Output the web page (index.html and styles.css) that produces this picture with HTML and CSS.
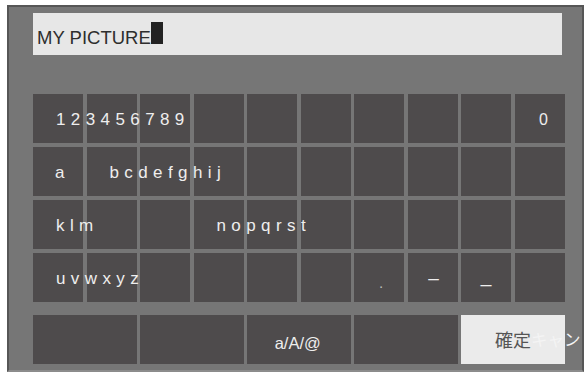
FILE: index.html
```html
<!DOCTYPE html>
<html lang="ja">
<head>
<meta charset="utf-8">
<title>Keyboard</title>
<link rel="stylesheet" href="styles.css">
</head>
<body>
<div class="panel">
  <div class="field"><span class="field-text">MY PICTURE</span><span class="cursor"></span></div>
  <div class="keys">
    <div class="key txt">123456789</div>
    <div class="key"></div><div class="key"></div><div class="key"></div><div class="key"></div>
    <div class="key"></div><div class="key"></div><div class="key"></div><div class="key"></div>
    <div class="key mid zero">0</div>

    <div class="key txt a">a</div>
    <div class="key txt">bcdefghij</div>
    <div class="key"></div><div class="key"></div><div class="key"></div><div class="key"></div>
    <div class="key"></div><div class="key"></div><div class="key"></div><div class="key"></div>

    <div class="key txt">klm</div>
    <div class="key"></div><div class="key"></div>
    <div class="key txt">nopqrst</div>
    <div class="key"></div><div class="key"></div><div class="key"></div><div class="key"></div>
    <div class="key"></div><div class="key"></div>

    <div class="key txt">uvwxyz</div>
    <div class="key"></div><div class="key"></div><div class="key"></div><div class="key"></div>
    <div class="key"></div>
    <div class="key mid dot">.</div>
    <div class="key mid dash">–</div>
    <div class="key mid under">_</div>
    <div class="key"></div>
  </div>
  <div class="bottom">
    <div class="key wide"></div>
    <div class="key wide"></div>
    <div class="key wide mode">a/A/@</div>
    <div class="key wide"></div>
    <div class="key wide ok"><span class="ok-main">確定</span><span class="ok-extra">キャン</span></div>
  </div>
</div>
</body>
</html>
```

FILE: styles.css
```css
html, body {
  margin: 0;
  padding: 0;
  background: #ffffff;
  overflow: hidden;
}

body {
  font-family: "Liberation Sans", Arial, "Noto Sans CJK JP", sans-serif;
  width: 587px;
  height: 374px;
}

.panel {
  margin: 5px 0 0 7px;
  width: 577px;
  height: 367px;
  box-sizing: border-box;
  border: 2px solid #565656;
  border-bottom-color: #8c8c8c;
  background: #767676;
  padding: 6px 0 0 24px;
}

.field {
  width: 529px;
  height: 42px;
  box-sizing: border-box;
  background: #e7e7e7;
  padding: 9px 4px 0;
  line-height: 1;
  font-size: 18.5px;
  color: #2e2e2e;
  white-space: nowrap;
}

.cursor {
  display: inline-block;
  width: 12px;
  height: 22px;
  background: #222222;
  vertical-align: baseline;
}

.keys {
  margin-top: 39px;
  display: grid;
  grid-template-columns: repeat(10, 50px);
  grid-auto-rows: 49px;
  column-gap: 3.5px;
  row-gap: 4px;
}

.key {
  background: #4e4b4c;
  color: #eeeeee;
  font-size: 17px;
  box-sizing: border-box;
  white-space: nowrap;
  display: flex;
  align-items: center;
  padding-top: 3px;
}

.txt {
  z-index: 1;
  letter-spacing: 5.4px;
  padding-left: 23px;
}

.txt.a {
  padding-left: 22px;
}

.mid {
  justify-content: center;
}

.zero {
  padding-left: 8px;
  font-size: 16px;
}

.dot {
  padding-top: 10px;
  padding-left: 4px;
  color: #bdbdbd;
  font-size: 15px;
}

.dash {
  padding-top: 0;
  padding-left: 2px;
  font-size: 19px;
}

.under {
  padding-top: 0;
  padding-bottom: 4px;
  font-size: 19px;
}

.bottom {
  margin-top: 13px;
  display: grid;
  grid-template-columns: repeat(5, 103.5px);
  grid-auto-rows: 49px;
  column-gap: 3.5px;
}

.wide {
  padding-top: 0;
}

.mode {
  justify-content: center;
  font-size: 16.5px;
  padding-top: 7px;
  padding-right: 2px;
}

.ok {
  background: #ebebeb;
  font-size: 18px;
  padding-left: 34px;
  padding-top: 0;
  padding-bottom: 2px;
  font-family: "Noto Sans CJK JP", sans-serif;
  z-index: 1;
}

.ok-main {
  color: #555555;
}

.ok-extra {
  color: #f4f4f4;
  font-size: 16.5px;
}
```
